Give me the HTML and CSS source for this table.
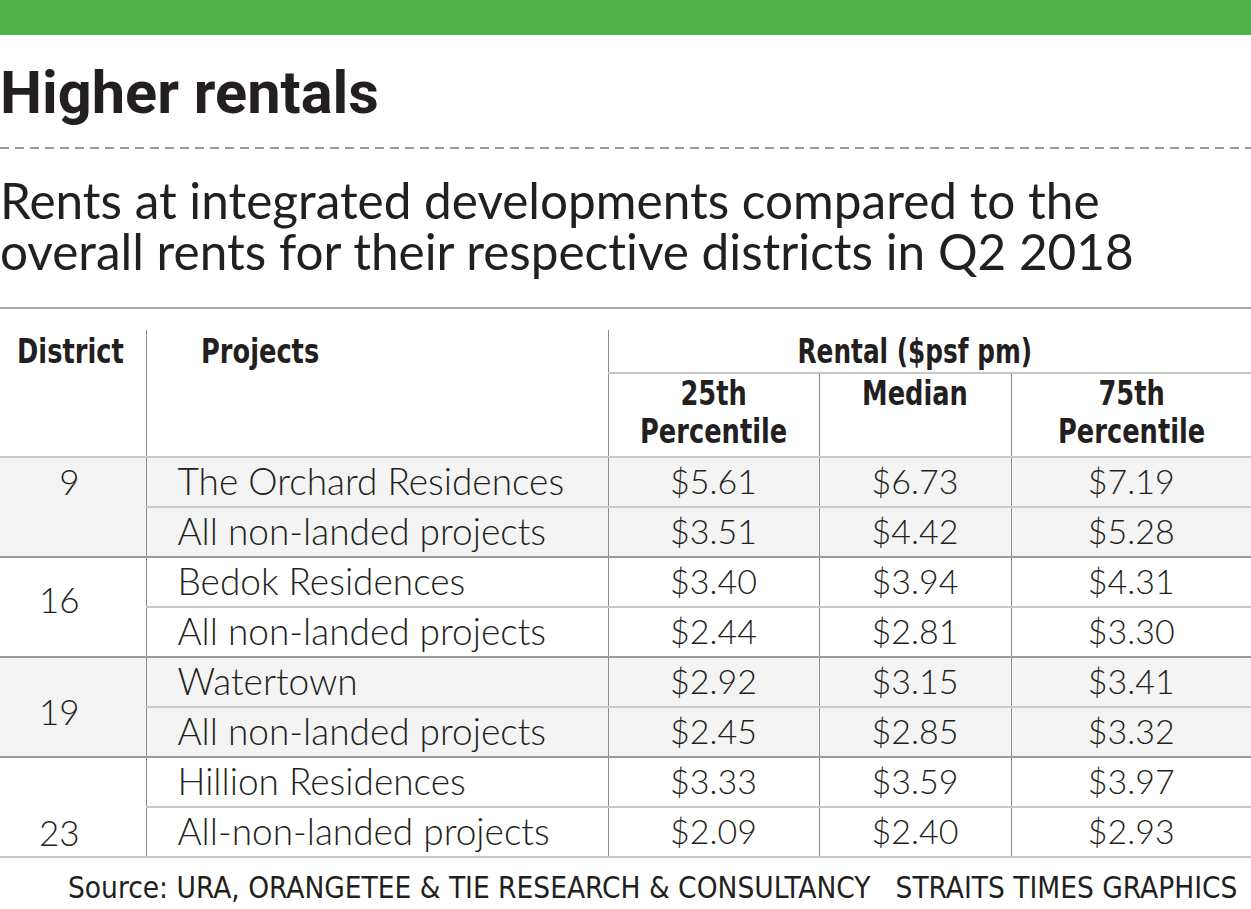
FILE: index.html
```html
<!DOCTYPE html>
<html lang="en">
<head>
<meta charset="utf-8">
<title>Higher rentals</title>
<link rel="stylesheet" href="styles.css">
</head>
<body>
<div class="page">
  <div class="topbar"></div>
  <h1 class="title">Higher rentals</h1>
  <div class="dashed"></div>
  <p class="subtitle">Rents at integrated developments compared to the<br>overall rents for their respective districts in Q2 2018</p>
  <div class="rule"></div>
  <table class="data">
    <colgroup>
      <col class="c-district">
      <col class="c-project">
      <col class="c-p25">
      <col class="c-med">
      <col class="c-p75">
    </colgroup>
    <thead>
      <tr class="h1row">
        <th rowspan="2" class="th-district"><span class="cond cond-left">District</span></th>
        <th rowspan="2" class="th-project"><span class="cond cond-left">Projects</span></th>
        <th colspan="3" class="th-rental"><span class="cond">Rental ($psf pm)</span></th>
      </tr>
      <tr class="h2row">
        <th class="th-sub"><span class="cond">25th<br>Percentile</span></th>
        <th class="th-sub"><span class="cond">Median</span></th>
        <th class="th-sub"><span class="cond">75th<br>Percentile</span></th>
      </tr>
    </thead>
    <tbody class="grp shaded">
      <tr>
        <td rowspan="2" class="dist dist-top">9</td>
        <td class="proj">The Orchard Residences</td>
        <td class="num">$5.61</td><td class="num">$6.73</td><td class="num">$7.19</td>
      </tr>
      <tr>
        <td class="proj">All non-landed projects</td>
        <td class="num">$3.51</td><td class="num">$4.42</td><td class="num">$5.28</td>
      </tr>
    </tbody>
    <tbody class="grp">
      <tr>
        <td rowspan="2" class="dist dist-mid dist-up">16</td>
        <td class="proj">Bedok Residences</td>
        <td class="num">$3.40</td><td class="num">$3.94</td><td class="num">$4.31</td>
      </tr>
      <tr>
        <td class="proj">All non-landed projects</td>
        <td class="num">$2.44</td><td class="num">$2.81</td><td class="num">$3.30</td>
      </tr>
    </tbody>
    <tbody class="grp shaded">
      <tr>
        <td rowspan="2" class="dist dist-mid dist-down">19</td>
        <td class="proj">Watertown</td>
        <td class="num">$2.92</td><td class="num">$3.15</td><td class="num">$3.41</td>
      </tr>
      <tr>
        <td class="proj">All non-landed projects</td>
        <td class="num">$2.45</td><td class="num">$2.85</td><td class="num">$3.32</td>
      </tr>
    </tbody>
    <tbody class="grp last">
      <tr>
        <td rowspan="2" class="dist dist-bot">23</td>
        <td class="proj">Hillion Residences</td>
        <td class="num">$3.33</td><td class="num">$3.59</td><td class="num">$3.97</td>
      </tr>
      <tr>
        <td class="proj">All-non-landed projects</td>
        <td class="num">$2.09</td><td class="num">$2.40</td><td class="num">$2.93</td>
      </tr>
    </tbody>
  </table>
  <p class="source"><span>Source: URA, ORANGETEE &amp; TIE RESEARCH &amp; CONSULTANCY</span><span class="credit">STRAITS TIMES GRAPHICS</span></p>
</div>
</body>
</html>
```

FILE: styles.css
```css
html, body {
  margin: 0;
  padding: 0;
  background: #ffffff;
}

.page {
  width: 1251px;
  height: 909px;
  overflow: hidden;
  color: #231f20;
  font-family: "Lato", "Open Sans", sans-serif;
  font-variant-ligatures: none;
}

.topbar {
  height: 35px;
  background: #52b04a;
}

.title {
  margin: 0;
  padding-top: 23px;
  height: 86px;
  font-family: "Roboto", "Liberation Sans", sans-serif;
  font-weight: 700;
  font-size: 59.5px;
  line-height: 70px;
  letter-spacing: 0;
  color: #231f20;
}

.dashed {
  margin-top: 3px;
  height: 2px;
  background: repeating-linear-gradient(to right, #9a9a9a 0 9px, transparent 9px 15px);
}

.subtitle {
  margin: 0;
  padding-top: 26px;
  height: 132px;
  font-family: "Lato", "Open Sans", sans-serif;
  font-weight: 400;
  font-size: 49.5px;
  line-height: 51px;
  color: #231f20;
}

.rule {
  height: 2px;
  background: #a8a8a8;
}

.data {
  margin-top: 21px;
  width: 1251px;
  border-collapse: collapse;
  table-layout: fixed;
}

.c-district { width: 146px; }
.c-project { width: 462px; }
.c-p25 { width: 211px; }
.c-med { width: 192px; }
.c-p75 { width: 240px; }

.data th {
  font-family: "DejaVu Sans Condensed", "DejaVu Sans", sans-serif;
  font-weight: 700;
  font-size: 34px;
  color: #231f20;
  vertical-align: top;
  padding: 0;
}

.cond {
  display: inline-block;
  transform: scaleX(0.84);
  transform-origin: center top;
  white-space: nowrap;
}

.cond-left {
  transform-origin: left top;
}

.h1row th {
  height: 42px;
  line-height: 42px;
}

.th-district {
  text-align: left;
  padding-left: 17px !important;
  border-right: 1px solid #8c8c8c;
}

.th-project {
  text-align: left;
  padding-left: 54px !important;
  border-right: 1px solid #8c8c8c;
}

.th-rental {
  text-align: center;
  border-bottom: 2px solid #c8c8c8;
}

.th-rental .cond {
  transform: scaleX(0.81);
  margin-left: -30px;
}

.h2row th {
  height: 82px;
  line-height: 38px;
  text-align: center;
}

.th-sub + .th-sub {
  border-left: 1px solid #8c8c8c;
}

.grp {
  border-top: 2px solid #9a9a9a;
}

thead + .grp {
  border-top: 2px solid #c8c8c8;
}

.grp.last {
  border-bottom: 2px solid #c8c8c8;
}

.shaded {
  background: #f3f4f3;
}

.data td {
  padding: 0;
  height: 48px;
  font-family: "Lato", "Open Sans", sans-serif;
  font-weight: 300;
  font-size: 35px;
  line-height: 46px;
  vertical-align: top;
  color: #231f20;
}

.grp tr + tr td.proj,
.grp tr + tr td.num {
  border-top: 2px solid #c8c8c8;
}

.data td.dist {
  text-align: right;
  padding-right: 66px;
  line-height: 48px;
  border-right: 1px solid #8c8c8c;
}

.data td.dist-top { vertical-align: top; line-height: 46px; }
.data td.dist-mid { vertical-align: middle; }
.data td.dist-bot { vertical-align: bottom; line-height: 48px; }
.data td.dist-up { padding-bottom: 16px; }
.data td.dist-down { padding-top: 8px; }

.data td.proj {
  padding-left: 31px;
  font-size: 37px;
  border-right: 1px solid #8c8c8c;
}

.data td.num {
  text-align: center;
  font-size: 34px;
}

.num + .num {
  border-left: 1px solid #8c8c8c;
}

.source {
  margin: 0;
  padding-top: 12px;
  padding-left: 68px;
  font-family: "DejaVu Sans Condensed", "DejaVu Sans", sans-serif;
  font-weight: 400;
  font-size: 29.5px;
  line-height: 36px;
  color: #231f20;
  white-space: nowrap;
}

.credit {
  margin-left: 25px;
}
```
